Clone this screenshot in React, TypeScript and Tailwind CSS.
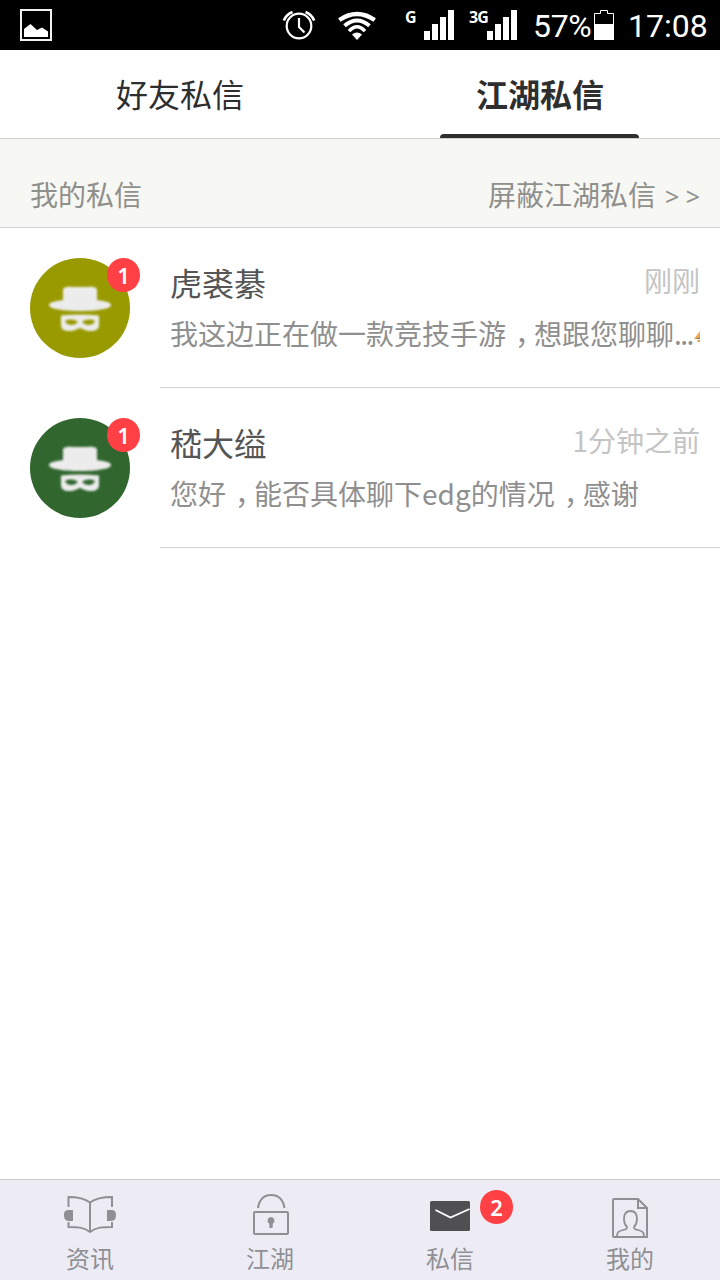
import { Fragment, type ReactNode } from 'react'

interface Conversation {
  name: string
  time: string
  message: string
  unread: number
  avatarClass: string
  clipped?: boolean
}

const conversations: Conversation[] = [
  {
    name: '虎裘綦',
    time: '刚刚',
    message: '我这边正在做一款竞技手游，想跟您聊聊',
    unread: 1,
    avatarClass: 'bg-[#999a00]',
    clipped: true,
  },
  {
    name: '嵇大缢',
    time: '1分钟之前',
    message: '您好，能否具体聊下edg的情况，感谢',
    unread: 1,
    avatarClass: 'bg-[#31672f]',
  },
]

function SignalBars() {
  return (
    <svg className="h-[30px] w-[30px]" viewBox="0 0 30 30" fill="#fff">
      <path d="M0 21h6v9H0zM8 14h6v16H8zM16 7h6v23h-6zM24 0h6v30h-6z" />
    </svg>
  )
}

function StatusBar() {
  return (
    <div className="flex h-[50px] shrink-0 items-start bg-black font-['Roboto','Noto_Sans',sans-serif] text-white">
      <svg className="mt-[9px] ml-5 h-8 w-8" viewBox="0 0 32 32">
        <rect x="1" y="1" width="30" height="30" fill="none" stroke="#f2f2f2" strokeWidth="2" />
        <path d="M4 28v-8l6.500-5 6.500 6 5-2.500 6 4V28z" fill="#fff" />
      </svg>

      {/* Alarm */}
      <svg
        className="mt-[9px] ml-[230px] h-8 w-[34px]"
        viewBox="0 0 34 32"
        fill="none"
        stroke="#fff"
        strokeWidth="2.2"
      >
        <circle cx="17" cy="17" r="12.300" />
        <path d="M17 9v9l5.500 5.500" />
        <path d="M1.800 11.500C3.500 7.500 6.500 4.500 10.500 3M32.200 11.500C30.500 7.500 27.500 4.500 23.500 3" strokeWidth="2.600" />
      </svg>

      {/* Wifi */}
      <svg className="mt-[11px] ml-[22px] h-[30px] w-[38px]" viewBox="0 0 38 30" fill="none" stroke="#fff">
        <path d="M1.300 9Q19-3 36.700 9" strokeWidth="4.300" />
        <path d="M6.500 14.800Q19 4.200 31.500 14.800" strokeWidth="3.900" />
        <path d="M11 20.200Q19 11.300 27 20.200" strokeWidth="3.500" />
        <path d="M19 29l-5-5.500Q19 19.500 24 23.500z" fill="#fff" stroke="none" />
      </svg>

      <span className="mt-[7px] ml-[29px] w-[19px] font-['Noto_Sans',sans-serif] text-[16px] leading-5 font-bold">
        G
      </span>
      <div className="mt-2.5">
        <SignalBars />
      </div>
      <span className="mt-[7px] ml-[15px] w-[18px] font-['Noto_Sans',sans-serif] text-[16px] leading-5 font-bold tracking-[-1px]">
        3G
      </span>
      <div className="mt-2.5">
        <SignalBars />
      </div>

      <span className="ml-4 w-[60px] text-[32px] leading-[52px] tracking-[-0.3px] whitespace-nowrap">57%</span>
      <svg className="mt-2.5 ml-[1px] h-[30px] w-5" viewBox="0 0 20 30">
        <path d="M.5 29.500v-26h6v-3h7v3h6v26z" fill="none" stroke="#fff" />
        <path d="M0 14h20v16H0z" fill="#fff" />
      </svg>
      <span className="ml-[14px] text-[32px] leading-[52px]">17:08</span>
    </div>
  )
}

function Badge({ count }: { count: number }) {
  return (
    <span className="flex h-[34px] w-[33px] items-center justify-center rounded-full bg-[#ff4145] font-['Noto_Sans',sans-serif] text-[22px] leading-none font-semibold text-white">
      {count}
    </span>
  )
}

// Full-width commas sit in the middle of their cell
function MessageText({ text }: { text: string }) {
  return (
    <>
      {text.split('，').map((part, index) => (
        <Fragment key={index}>
          {index > 0 && (
            <span className="mr-[5px] ml-[9px] inline-block w-[14px] [font-feature-settings:'halt']">，</span>
          )}
          {part}
        </Fragment>
      ))}
    </>
  )
}

function HatAvatar() {
  return (
    <svg className="h-[100px] w-[100px] blur-[0.8px]" viewBox="0 0 100 100" fill="#ececec">
      <path d="M33 31c3-3 7-2 10-2h14c3 0 7-1 10 2v11c6 1 14 2 14 5 0 4-15 6-31 6s-31-2-31-6c0-3 8-4 14-5z" />
      <path
        fillRule="evenodd"
        d="M31 57.500q19-2 38 0v9.500c0 4-3 6-8 6-6 0-7-2-11-3-4 1-5 3-11 3-5 0-8-2-8-6zM35 63c2 5 9 5 13 1-4-3-9-3-13-1zM52 64c4 4 11 4 13-1-4-2-9-2-13 1z"
      />
    </svg>
  )
}

function ConversationRow({ item }: { item: Conversation }) {
  return (
    <div className="flex h-40">
      <div className="w-40 shrink-0 pt-[30px] pl-[30px]">
        <div className={`relative h-[100px] w-[100px] rounded-full ${item.avatarClass}`}>
          <HatAvatar />
          <div className="absolute top-0 left-[77px]">
            <Badge count={item.unread} />
          </div>
        </div>
      </div>
      <div className="min-w-0 flex-1 border-b border-[#d2d2d2] pt-8 pr-5 pl-2.5">
        <div className="flex justify-between">
          <span className="text-[32px] leading-[44px] text-[#555]">{item.name}</span>
          <span className="pt-px text-[28px] leading-[38px] text-[#c4c4c4]">{item.time}</span>
        </div>
        <div className="mt-[9px] flex h-10 items-center text-[28px] leading-10 whitespace-nowrap text-[#8f8f8f]">
          <span>
            <MessageText text={item.message} />
            {item.clipped && <span className="tracking-[-1.5px]">...</span>}
          </span>
          {item.clipped && (
            <svg className="mt-2 ml-auto h-3 w-[6px] shrink-0" viewBox="0 0 6 12">
              <path d="M6 0v6L0 8z" fill="#f3a64b" />
              <path d="M0 8l6-2v2z" fill="#99793f" />
              <path d="M3 9h3v2H4z" fill="#e99a48" />
            </svg>
          )}
        </div>
      </div>
    </div>
  )
}

function NewsIcon() {
  return (
    <svg className="mb-1.5 h-10 w-14" viewBox="0 0 56 40" fill="none" stroke="#8f8f94" strokeWidth="2">
      <path d="M6.500 13V3C15 3 22 4 28 8.500 34 4 41 3 50 3v10M6.500 28v5c8.500 0 15.500 0 21.500 5 6-5 13-5 22-5v-5M28 8.500v29" />
      <path d="M11 16H7c-4 0-5 2-5 5s1 6 5 6h4zM45 16h4c4 0 5 2 5 5s-1 6-5 6h-4z" fill="#8f8f94" stroke="none" />
    </svg>
  )
}

function LockIcon() {
  return (
    <svg className="mb-[5px] ml-0.5 h-[42px] w-9" viewBox="0 0 36 42" fill="none" stroke="#8f8f94" strokeWidth="2">
      <path d="M5 15C6.500 6 11.500 2 18 2s12 4 13.500 13" />
      <rect x="1" y="19" width="34" height="22" rx="1" />
      <path d="M18 24a3.700 3.700 0 0 1 1.800 6.800L19.500 35h-3l-.3-4.200A3.700 3.700 0 0 1 18 24z" fill="#8f8f94" stroke="none" />
    </svg>
  )
}

function MailIcon() {
  return (
    <svg className="mb-[9px] h-[30px] w-10" viewBox="0 0 40 30">
      <rect width="40" height="30" rx="1.500" fill="#505052" />
      <path d="M5.500 9l15 7.500L39.500 8" fill="none" stroke="#fff" strokeWidth="1.800" />
    </svg>
  )
}

function ProfileIcon() {
  return (
    <svg className="mb-0.5 h-10 w-9" viewBox="0 0 36 40" fill="none" stroke="#8f8f94" strokeWidth="2">
      <path d="M2 1h24l9 9v29H2a1 1 0 0 1-1-1V2a1 1 0 0 1 1-1zM26 1v9h9" />
      <path
        d="M5 38c0-4 2-5 6-6 3-.8 4-1 4-3-2-2-3-4.500-3-8 0-5 2.500-8 6.500-8s6.500 3 6.500 8c0 3.500-1 6-3 8 0 2 1 2.200 4 3 4 1 6 2 6 6"
        strokeWidth="1.800"
      />
    </svg>
  )
}

interface NavItemProps {
  label: string
  icon: ReactNode
  badge?: number
}

function NavItem({ label, icon, badge }: NavItemProps) {
  return (
    <div className="relative flex flex-1 flex-col items-center">
      <div className="flex h-[60px] items-end">{icon}</div>
      <span className="text-[24px] leading-9 text-[#8f8f94]">{label}</span>
      {badge && (
        <div className="absolute top-[10px] left-[120px]">
          <Badge count={badge} />
        </div>
      )}
    </div>
  )
}

export default function App() {
  return (
    <div className="flex h-[1280px] w-[720px] flex-col overflow-hidden bg-white font-['Noto_Sans_CJK_SC',sans-serif]">
      <StatusBar />

      {/* Tabs */}
      <div className="grid h-[89px] shrink-0 grid-cols-2 border-b border-[#cfcfcf] text-center text-[32px] leading-[86px] text-[#2e2e2e]">
        <div>好友私信</div>
        <div className="flex flex-col items-center">
          <span className="h-[84px] font-bold">江湖私信</span>
          <span className="mr-0.5 h-1 w-[199px] rounded-t-[4px] bg-[#2e2e2e]" />
        </div>
      </div>

      <div className="flex h-[89px] shrink-0 justify-between border-b border-[#d2d2d2] bg-[#f7f7f4] pt-[35px] pr-5 pl-[30px] text-[28px] leading-10 text-[#8f8f8c]">
        <span>我的私信</span>
        <span>
          屏蔽江湖私信<span className="ml-[9px] font-['Noto_Sans',sans-serif] text-[25px]">&gt; &gt;</span>
        </span>
      </div>

      <div className="flex-1">
        {conversations.map((item) => (
          <ConversationRow key={item.name} item={item} />
        ))}
      </div>

      {/* Bottom navigation */}
      <div className="flex h-[101px] shrink-0 border-t border-[#cbcbcf] bg-[#edecf4]">
        <NavItem label="资讯" icon={<NewsIcon />} />
        <NavItem label="江湖" icon={<LockIcon />} />
        <NavItem label="私信" icon={<MailIcon />} badge={2} />
        <NavItem label="我的" icon={<ProfileIcon />} />
      </div>
    </div>
  )
}
